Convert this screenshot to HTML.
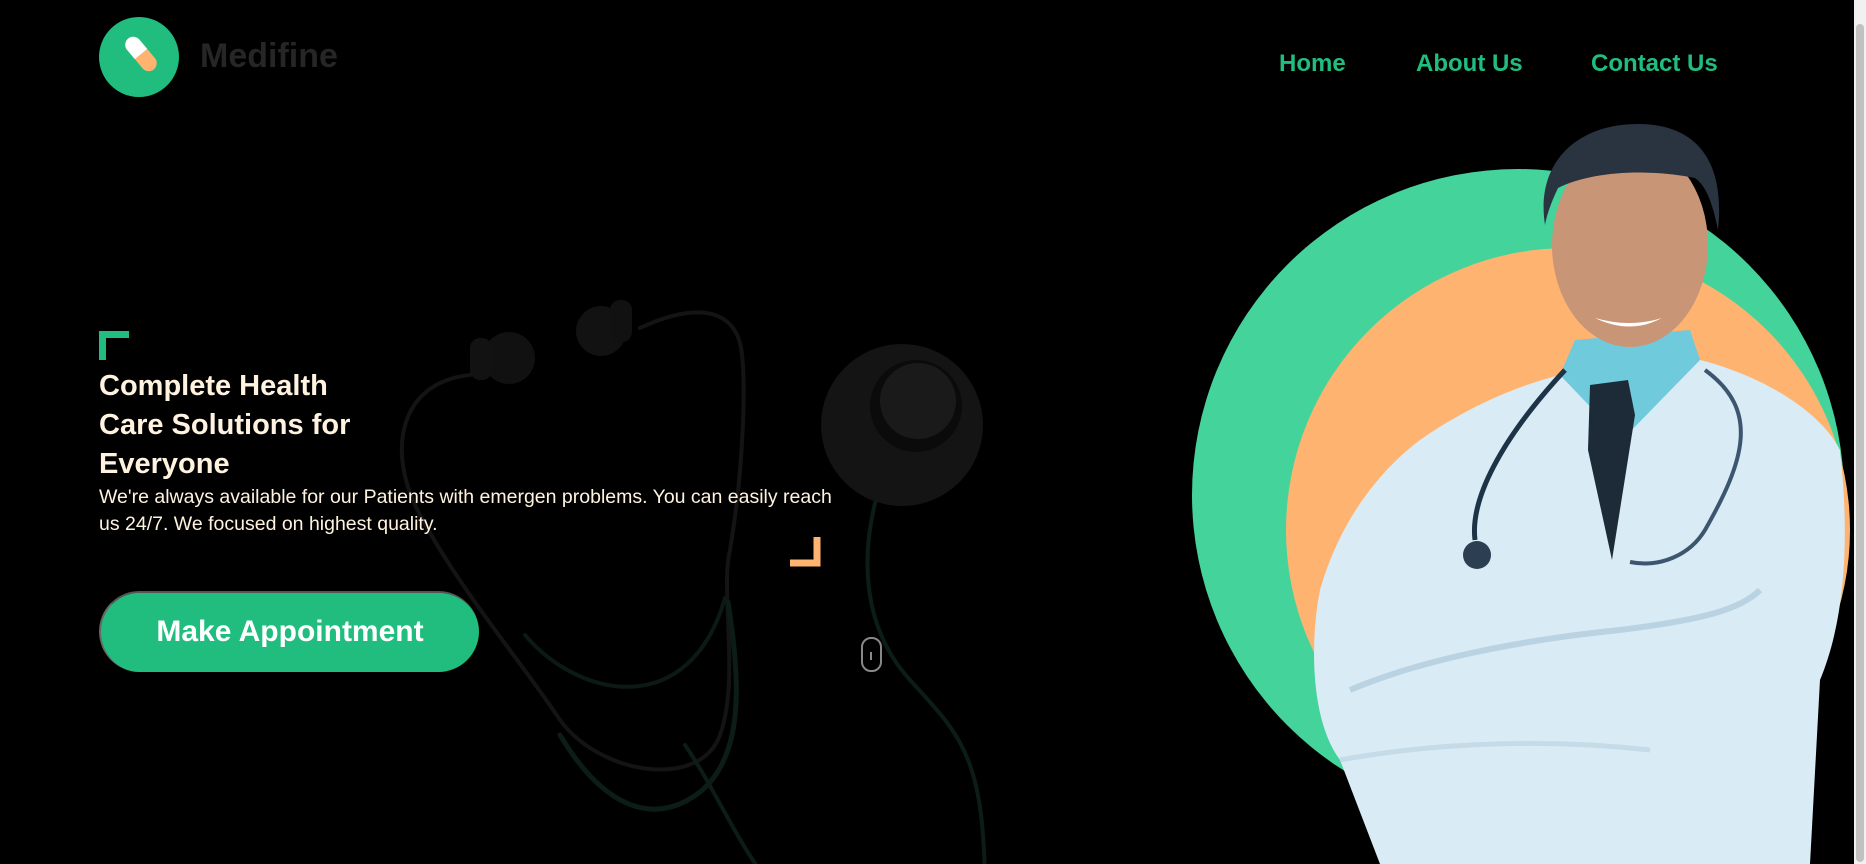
<!DOCTYPE html>
<html><head><meta charset="utf-8"><style>
*{margin:0;padding:0;box-sizing:border-box}
body{width:1866px;height:864px;background:#000;overflow:hidden;position:relative;font-family:"Liberation Sans",sans-serif}
.abs{position:absolute}
.nav a{position:absolute;top:50px;color:#20bd7f;font-weight:bold;font-size:24px;text-decoration:none}
h1{position:absolute;left:99px;top:367px;color:#fff3df;font-size:29px;line-height:39px;font-weight:bold;width:300px}
p{position:absolute;left:99px;top:484px;color:#fff3df;font-size:19.5px;line-height:27px;width:820px}
.btn{position:absolute;left:99px;top:591px;width:380px;height:81px;border-radius:41px;background:#20bd7f;border-left:2px solid #666;border-top:2px solid #555;color:#fff;font-size:30px;font-weight:bold;text-align:center;line-height:77px}
</style></head><body>
<svg class="abs" style="left:0;top:0" width="1866" height="864">
<g transform="translate(0,30)">
<g fill="none" stroke-linecap="round">
<path d="M470 345 C400 352 385 420 420 485 C460 560 520 630 560 690 C600 745 700 760 720 705 C740 650 720 560 730 520 C745 430 745 350 742 325 C738 280 700 270 640 298" stroke="#141414" stroke-width="4"/>
<path d="M525 605 C580 670 690 690 725 568" stroke="#0c1a15" stroke-width="4"/>
<path d="M728 572 C740 650 745 725 700 762 C650 800 600 772 560 705" stroke="#0c1d17" stroke-width="5"/>
<path d="M685 715 C720 765 760 864 790 864" stroke="#0c1d17" stroke-width="4"/>
<path d="M880 455 C860 520 860 595 910 650 C960 705 985 725 985 864" stroke="#0c1d17" stroke-width="4"/>
</g>
<circle cx="509" cy="328" r="26" fill="#111"/><rect x="470" y="308" width="22" height="42" rx="10" fill="#121212"/>
<circle cx="601" cy="301" r="25" fill="#121212"/><rect x="610" y="270" width="22" height="42" rx="10" fill="#111"/>
<circle cx="902" cy="395" r="81" fill="#141414"/>
<circle cx="916" cy="376" r="46" fill="#0b0b0b"/><circle cx="918" cy="371" r="38" fill="#1a1a1a"/>
</g>
<rect x="862" y="638" width="19" height="33" rx="9" fill="none" stroke="#888" stroke-width="2"/>
<line x1="871" y1="652" x2="871" y2="660" stroke="#888" stroke-width="2"/>
<path d="M102.5 360 V334.5 H129" fill="none" stroke="#20bd7f" stroke-width="7"/>
<path d="M817 537 V563 H790" fill="none" stroke="#ffb370" stroke-width="7"/>
<circle cx="139" cy="57" r="40" fill="#20bd7f"/>
<g transform="rotate(-40 141 54)"><rect x="133" y="34" width="16" height="40" rx="8" fill="#ffb370"/><path d="M133 54 V42 a8 8 0 0 1 16 0 V54 Z" fill="#fff"/></g>
<circle cx="1518" cy="495" r="326" fill="#43d39b"/>
<circle cx="1568" cy="530" r="282" fill="#ffb370"/>
<path d="M1420 440 C1470 405 1520 385 1560 375 L1700 360 C1760 375 1820 410 1840 450 C1850 540 1845 620 1820 680 L1810 864 L1380 864 L1340 760 C1310 720 1310 640 1320 590 C1340 520 1380 470 1420 440Z" fill="#d9ebf4"/>
<path d="M1560 375 L1622 440 L1700 360 L1690 330 L1575 340Z" fill="#6fcadb"/>
<path d="M1590 385 L1628 380 L1635 415 L1612 560 L1588 450Z" fill="#1d2b38"/>
<path d="M1350 690 C1420 660 1520 640 1620 630 C1700 620 1740 610 1760 590" stroke="#b9d3e2" stroke-width="6" fill="none"/>
<path d="M1340 760 C1450 740 1560 740 1650 750" stroke="#c5dbe8" stroke-width="5" fill="none"/>
<path d="M1565 370 C1500 440 1470 500 1475 540" stroke="#1c3348" stroke-width="5" fill="none"/>
<path d="M1705 370 C1760 410 1745 460 1705 530 C1690 555 1660 568 1630 562" stroke="#3d5670" stroke-width="4" fill="none"/>
<circle cx="1477" cy="555" r="14" fill="#2b3e52"/>
<ellipse cx="1630" cy="245" rx="78" ry="102" fill="#c99577"/>
<path d="M1545 225 C1535 160 1580 123 1640 124 C1700 125 1725 165 1718 230 C1712 200 1705 185 1695 178 C1645 168 1590 172 1558 188 C1550 205 1547 215 1545 225Z" fill="#2a3440"/>
<path d="M1595 318 Q1630 335 1662 318 Q1630 328 1595 318Z" fill="#fff"/>
<rect x="1854" y="0" width="12" height="864" fill="#f1f1f1"/>
<rect x="1856" y="24" width="8" height="838" rx="4" fill="#c1c1c1"/>
</svg>
<div class="abs" style="left:200px;top:37px;font-size:34px;font-weight:bold;color:#262626">Medifine</div>
<div class="nav"><a style="left:1279px">Home</a><a style="left:1416px">About Us</a><a style="left:1591px">Contact Us</a></div>
<h1>Complete Health Care Solutions for Everyone</h1>
<p>We're always available for our Patients with emergen problems. You can easily reach<br>us 24/7. We focused on highest quality.</p>
<div class="btn">Make Appointment</div>
</body></html>
